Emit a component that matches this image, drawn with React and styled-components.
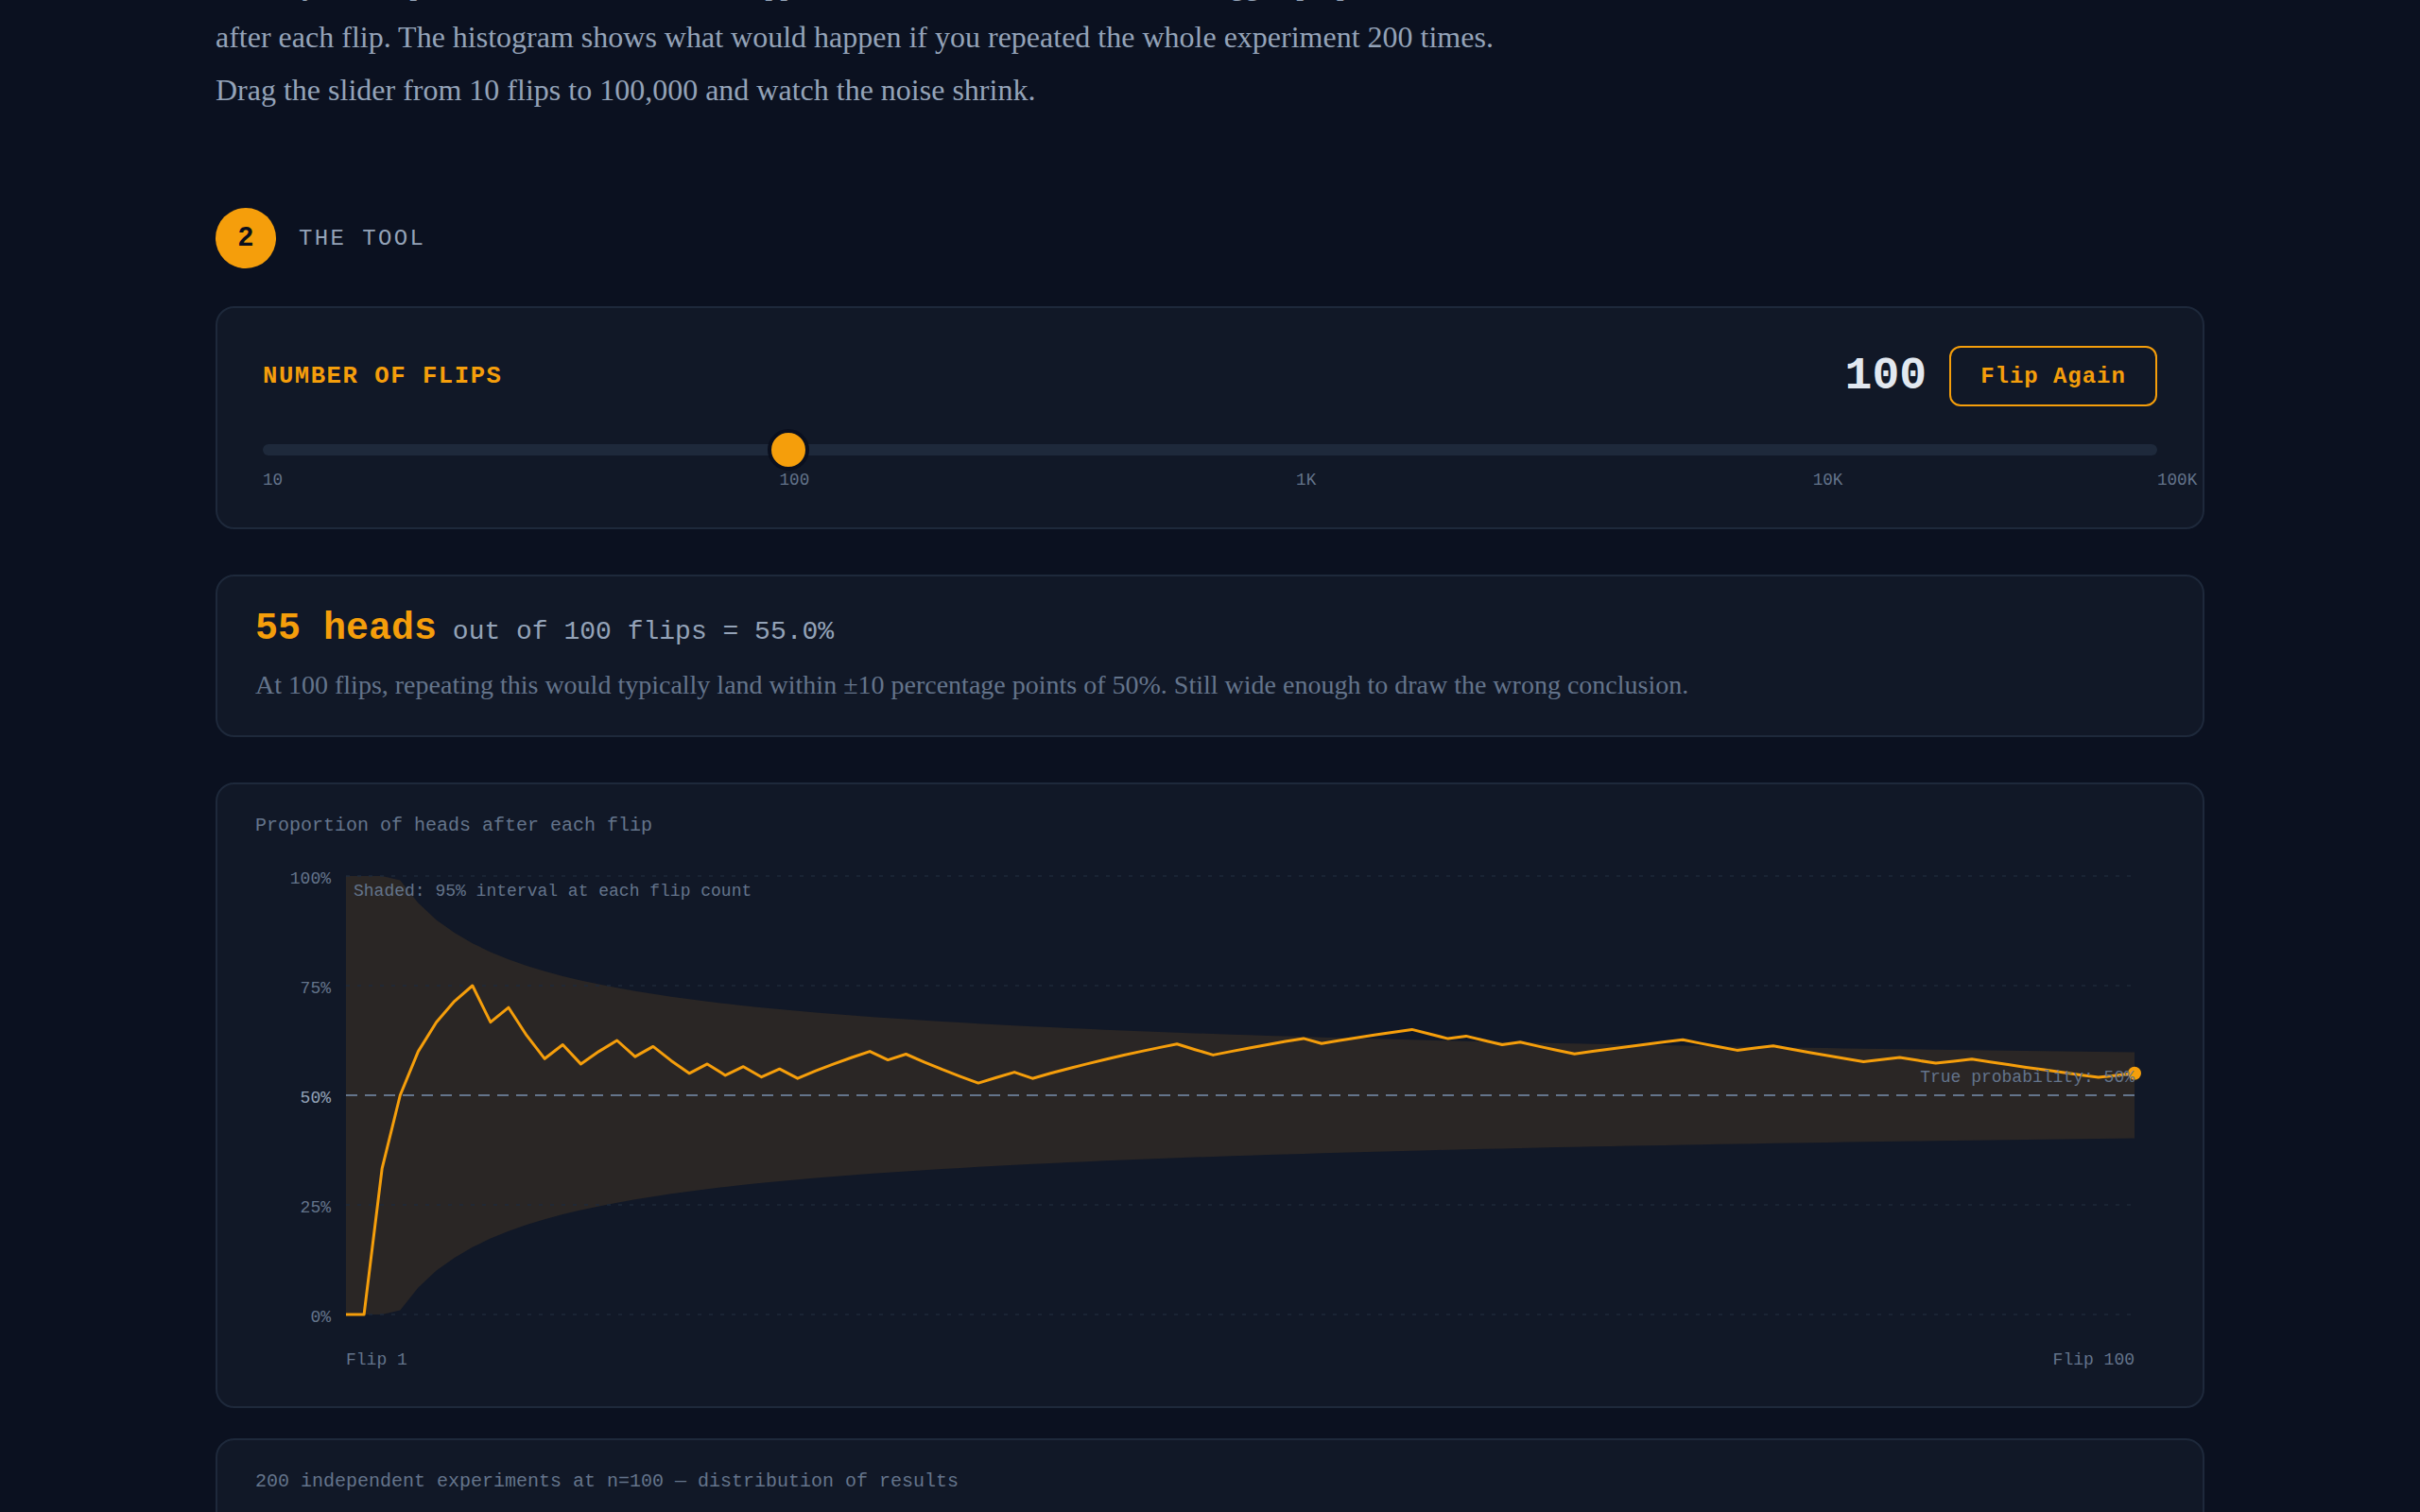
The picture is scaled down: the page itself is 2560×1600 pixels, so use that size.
import React from 'react';
import styled, { createGlobalStyle } from 'styled-components';

const MONO = '"Liberation Mono", monospace';
const SERIF = '"Liberation Serif", serif';
const AMBER = '#f59e0b';

const GlobalStyle = createGlobalStyle`
  * { box-sizing: border-box; }
  html, body { margin: 0; padding: 0; background: #0b1120; }
`;

const Viewport = styled.div`
  height: 100vh;
  overflow: hidden;
`;

const Page = styled.main`
  width: 2104px;
  margin: -45px auto 0;
`;

const Intro = styled.p`
  margin: 0 0 97px;
  max-width: 1400px;
  font-family: ${SERIF};
  font-size: 32px;
  line-height: 56px;
  color: #94a3b8;
`;

const SectionHeader = styled.div`
  display: flex;
  align-items: center;
  gap: 24px;
  margin-bottom: 40px;
`;

const StepBadge = styled.div`
  width: 64px;
  height: 64px;
  border-radius: 50%;
  background: ${AMBER};
  color: #0a0f1e;
  display: flex;
  align-items: center;
  justify-content: center;
  font-family: ${MONO};
  font-size: 28.8px;
  font-weight: 700;
`;

const SectionTitle = styled.div`
  font-family: ${MONO};
  font-size: 24px;
  letter-spacing: 0.1em;
  text-transform: uppercase;
  color: #94a3b8;
`;

const Card = styled.section`
  background: #111827;
  border: 2px solid #1e293b;
  border-radius: 20px;
  padding: ${({ $pad }) => $pad || '32px 40px'};
  margin-bottom: ${({ $gap }) => $gap || 48}px;
  min-height: ${({ $minH }) => $minH || 0}px;
`;

const ControlRow = styled.div`
  display: flex;
  align-items: center;
  justify-content: space-between;
  margin-bottom: 24px;
`;

const ControlLabel = styled.div`
  font-family: ${MONO};
  font-size: 25.6px;
  font-weight: 700;
  letter-spacing: 0.06em;
  text-transform: uppercase;
  color: ${AMBER};
`;

const ControlRight = styled.div`
  display: flex;
  align-items: center;
  gap: 24px;
`;

const FlipCount = styled.span`
  font-family: ${MONO};
  font-size: 48px;
  font-weight: 700;
  color: #e2e8f0;
`;

const FlipButton = styled.button`
  width: 220px;
  height: 64px;
  padding: 0;
  background: transparent;
  border: 2px solid ${AMBER};
  border-radius: 12px;
  color: ${AMBER};
  font-family: ${MONO};
  font-size: 24px;
  font-weight: 700;
  letter-spacing: 0.04em;
`;

const Slider = styled.input`
  display: block;
  width: 100%;
  height: 44px;
  margin: 0;
  background: transparent;
  appearance: none;
  -webkit-appearance: none;

  &::-webkit-slider-runnable-track {
    height: 12px;
    border-radius: 6px;
    background: #1e293b;
  }

  &::-webkit-slider-thumb {
    -webkit-appearance: none;
    width: 44px;
    height: 44px;
    margin-top: -16px;
    border-radius: 50%;
    background: ${AMBER};
    border: 4px solid #0a0f1e;
  }
`;

const TickRow = styled.div`
  display: grid;
  grid-template-columns: 3fr 3fr 3fr 2fr 0;
`;

const Tick = styled.span`
  font-family: ${MONO};
  font-size: 17.6px;
  line-height: 20px;
  white-space: nowrap;
  color: #64748b;
`;

const ResultLine = styled.div`
  font-family: ${MONO};
  font-size: 28px;
  line-height: 52px;
  color: #94a3b8;
`;

const HeadsCount = styled.strong`
  font-size: 40px;
  font-weight: 700;
  color: ${AMBER};
`;

const ResultNote = styled.p`
  margin: 8px 0 0;
  font-family: ${SERIF};
  font-size: 28px;
  line-height: 44px;
  color: #64748b;
`;

const ChartTitle = styled.div`
  font-family: ${MONO};
  font-size: 20px;
  color: #64748b;
`;

const ChartSvg = styled.svg`
  display: block;
  margin-top: 16px;
`;

const AxisText = styled.text`
  font-family: ${MONO};
  font-size: 18px;
  fill: ${({ $hi }) => ($hi ? '#94a3b8' : '#64748b')};
`;

const NoteText = styled.text`
  font-family: ${MONO};
  font-size: 18px;
  fill: #64748b;
`;

// flip results read off the run: T = tails, H = heads
const FLIPS =
  'TTHHHHHHTHTTHTHHTHTTHTHTHTHHHHTHTTTTHHTHHHHHHHHTTHHHHHTHHHHHTTHTTHTTTHHHHHHTTTHHTTTTTHHTTHHTTTTTTTHH';

const W = 2020;
const H = 555;
const X0 = 96;
const X1 = 1988;
const Y0 = 26;
const Y1 = 490;
const N = FLIPS.length;

const xAt = (n) => X0 + ((n - 1) / (N - 1)) * (X1 - X0);
const yAt = (p) => Y1 - p * (Y1 - Y0);
const clamp = (p) => Math.min(1, Math.max(0, p));

const steps = Array.from({ length: N }, (_, i) => i + 1);

let heads = 0;
const linePts = steps.map((n) => {
  if (FLIPS[n - 1] === 'H') heads += 1;
  return `${xAt(n).toFixed(1)},${yAt(heads / n).toFixed(1)}`;
});
const lastP = heads / N;

const upper = steps.map((n) => `${xAt(n).toFixed(1)},${yAt(clamp(0.5 + 0.98 / Math.sqrt(n))).toFixed(1)}`);
const lower = steps.map((n) => `${xAt(n).toFixed(1)},${yAt(clamp(0.5 - 0.98 / Math.sqrt(n))).toFixed(1)}`).reverse();

const ticks = ['10', '100', '1K', '10K', '100K'];
const gridLevels = [1, 0.75, 0.25, 0];
const axisLevels = [
  ['100%', 1],
  ['75%', 0.75],
  ['50%', 0.5],
  ['25%', 0.25],
  ['0%', 0],
];

const FlipChart = () => (
  <ChartSvg width={W} height={H} viewBox={`0 0 ${W} ${H}`}>
    <polygon points={[...upper, ...lower].join(' ')} fill="#2a2625" />
    {gridLevels.map((p) => (
      <line
        key={p}
        x1={X0}
        x2={X1}
        y1={yAt(p)}
        y2={yAt(p)}
        stroke="#1e293b"
        strokeOpacity="0.7"
        strokeWidth="2"
        strokeDasharray="4 8"
      />
    ))}
    <line x1={X0} x2={X1} y1={yAt(0.5)} y2={yAt(0.5)} stroke="#64748b" strokeWidth="2" strokeDasharray="12 8" />
    <polyline points={linePts.join(' ')} fill="none" stroke={AMBER} strokeWidth="3" strokeLinejoin="round" />
    <circle cx={X1} cy={yAt(lastP)} r="7" fill={AMBER} />
    {axisLevels.map(([label, p]) => (
      <AxisText key={label} x={X0 - 16} y={yAt(p) + 8} textAnchor="end" $hi={p === 0.5}>
        {label}
      </AxisText>
    ))}
    <NoteText x={X0 + 8} y={Y0 + 21}>Shaded: 95% interval at each flip count</NoteText>
    <NoteText x={X1} y={yAt(0.5) - 14} textAnchor="end">True probability: 50%</NoteText>
    <AxisText x={X0} y={Y1 + 53}>Flip 1</AxisText>
    <AxisText x={X1} y={Y1 + 53} textAnchor="end">Flip 100</AxisText>
  </ChartSvg>
);

const App = () => (
  <Viewport>
    <GlobalStyle />
    <Page>
      <Intro>
        Below you will put a coin to the test: what happens. The line chart shows that the logged proportion of heads
        after each flip. The histogram shows what would happen if you repeated the whole experiment 200 times.
        Drag the slider from 10 flips to 100,000 and watch the noise shrink.
      </Intro>

      <SectionHeader>
        <StepBadge>2</StepBadge>
        <SectionTitle>The Tool</SectionTitle>
      </SectionHeader>

      <Card $pad="40px 48px 40px">
        <ControlRow>
          <ControlLabel>Number of Flips</ControlLabel>
          <ControlRight>
            <FlipCount>100</FlipCount>
            <FlipButton type="button">Flip Again</FlipButton>
          </ControlRight>
        </ControlRow>
        <Slider type="range" min="0" max="100" step="0.01" defaultValue="27.24" />
        <TickRow>
          {ticks.map((t) => (
            <Tick key={t}>{t}</Tick>
          ))}
        </TickRow>
      </Card>

      <Card $pad="30px 40px 31px">
        <ResultLine>
          <HeadsCount>55 heads</HeadsCount> out of 100 flips = 55.0%
        </ResultLine>
        <ResultNote>
          At 100 flips, repeating this would typically land within ±10 percentage points of 50%. Still wide enough to
          draw the wrong conclusion.
        </ResultNote>
      </Card>

      <Card $gap={32}>
        <ChartTitle>Proportion of heads after each flip</ChartTitle>
        <FlipChart />
      </Card>

      <Card $minH={420}>
        <ChartTitle>200 independent experiments at n=100 — distribution of results</ChartTitle>
      </Card>
    </Page>
  </Viewport>
);

export default App;
